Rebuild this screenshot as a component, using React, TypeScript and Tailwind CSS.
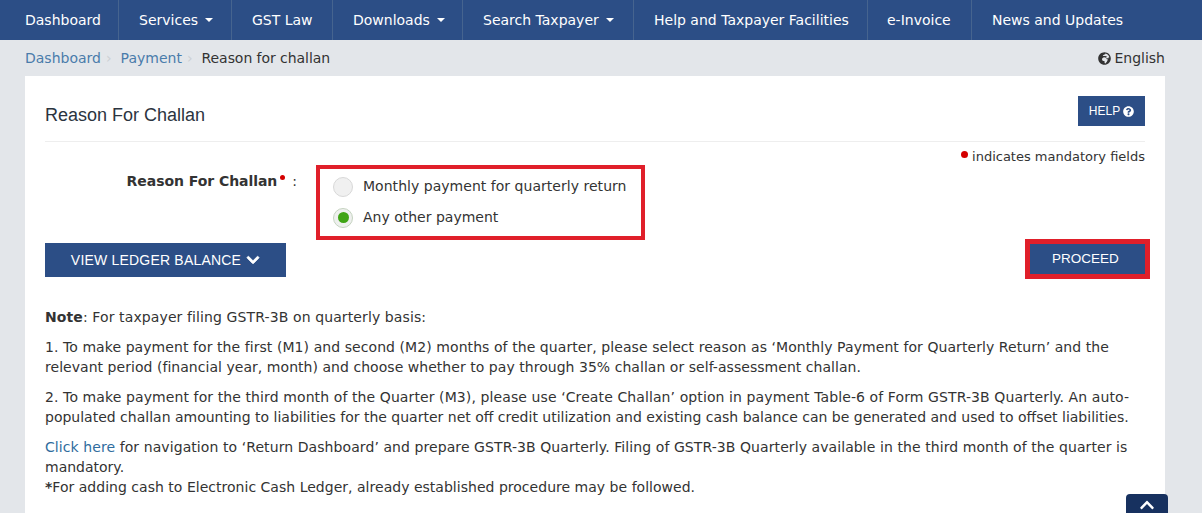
import { FaGlobeAfrica, FaQuestionCircle, FaChevronDown, FaChevronUp } from "react-icons/fa";

function Caret() {
  return <span className="ml-[7px] inline-block h-0 w-0 border-x-[4px] border-t-[4px] border-x-transparent border-t-white align-middle" />;
}

function Sep() {
  return <span className="ml-[5px] mr-[9px] text-[14px] leading-none text-[#ccd0d4]">›</span>;
}

export default function App() {
  return (
    <div className="h-[513px] w-[1202px] overflow-hidden bg-[#e3e6ea] font-['DejaVu_Sans',sans-serif] text-[14px] text-[#333333]">
      <nav className="flex h-10 items-stretch bg-[#2c4e86] text-white">
        <a className="flex w-[119px] items-center border-r border-[#46648f] pl-[25px]">Dashboard</a>
        <a className="flex w-[113px] items-center border-r border-[#46648f] pl-[20px]">Services<Caret /></a>
        <a className="flex w-[101px] items-center border-r border-[#46648f] pl-[20px]">GST Law</a>
        <a className="flex w-[130px] items-center border-r border-[#46648f] pl-[20px]">Downloads<Caret /></a>
        <a className="flex w-[171px] items-center border-r border-[#46648f] pl-[20px]">Search Taxpayer<Caret /></a>
        <a className="flex w-[234px] items-center border-r border-[#46648f] pl-[20px]">Help and Taxpayer Facilities</a>
        <a className="flex w-[104px] items-center border-r border-[#46648f] pl-[19px]">e-Invoice</a>
        <a className="flex items-center pl-[20px]">News and Updates</a>
      </nav>

      <div className="flex h-9 items-center justify-between pl-[25px] pr-[37px]">
        <div className="flex items-center">
          <a className="text-[#4a7cab]">Dashboard</a>
          <Sep />
          <a className="text-[#4a7cab]">Payment</a>
          <Sep />
          <span className="tracking-[-0.05px]">Reason for challan</span>
        </div>
        <div className="flex items-center gap-[3px]">
          <FaGlobeAfrica className="size-[13px] text-[#333]" />
          <span>English</span>
        </div>
      </div>

      <main className="mx-[25px] h-[437px] w-[1140px] bg-white px-5 pt-5">
        <div className="flex h-[46px] items-start justify-between border-b border-[#eeeeee]">
          <h1 className="pt-[8px] font-['Liberation_Sans',sans-serif] text-[18px] leading-[22px] text-[#2b3440]">Reason For Challan</h1>
          <button className="flex h-[30px] w-[67px] items-center justify-center gap-[3px] bg-[#2c4e86] font-['Liberation_Sans',sans-serif] text-[12px] text-white">
            HELP <FaQuestionCircle className="size-[11px]" />
          </button>
        </div>

        <div className="flex h-[23px] items-center justify-end pt-[7px] text-[13px]">
          <span className="mb-[5px] mr-[4px] size-[7px] rounded-full bg-[#d40000]" />
          <span>indicates mandatory fields</span>
        </div>

        <div className="flex items-start">
          <div className="flex h-[40px] w-[252px] items-start justify-end pt-[6px]">
            <b className="font-bold tracking-[-0.05px]">Reason For Challan</b>
            <span className="mx-[3px] mt-[4px] size-[5px] rounded-full bg-[#d40000]" />
            <span className="ml-[4px]">:</span>
          </div>
          <div className="ml-[19px] flex h-[75px] w-[329px] flex-col border-4 border-[#e01f2a] pl-[13px] pt-[2px]">
            <label className="flex h-[31px] items-center gap-[10px] tracking-[0.03px]">
              <span className="size-[20px] rounded-full border border-[#d8d8d8] bg-[#f0f0f0]" />
              Monthly payment for quarterly return
            </label>
            <label className="flex h-[31px] items-center gap-[10px]">
              <span className="flex size-[20px] items-center justify-center rounded-full border border-[#c5d3c0] bg-[#eef0ee]">
                <span className="size-[11px] rounded-full bg-[#3fa415]" />
              </span>
              Any other payment
            </label>
          </div>
        </div>

        <div className="-mt-[1px] flex items-start justify-between">
          <button className="mt-[4px] flex h-[34px] w-[241px] items-center justify-center gap-[5px] bg-[#2c4e86] font-['Liberation_Sans',sans-serif] text-[14px] tracking-[0.2px] text-white">
            VIEW LEDGER BALANCE <FaChevronDown className="size-[14px] stroke-current stroke-[30]" />
          </button>
          <div className="-mr-[5px] border-[5px] border-[#e01f2a]">
            <button className="flex h-[30px] w-[115px] items-center justify-center bg-[#2c4e86] pr-[4px] font-['Liberation_Sans',sans-serif] text-[13.5px] text-white">
              PROCEED
            </button>
          </div>
        </div>

        <div className="mt-[28px] leading-[20px]">
          <p className="tracking-[0.11px]"><b>Note</b>: For taxpayer filing GSTR-3B on quarterly basis:</p>
          <p className="mt-[10px]">
            <span className="block whitespace-nowrap tracking-[0.07px]">1. To make payment for the first (M1) and second (M2) months of the quarter, please select reason as ‘Monthly Payment for Quarterly Return’ and the</span>
            <span className="block whitespace-nowrap tracking-[0.04px]">relevant period (financial year, month) and choose whether to pay through 35% challan or self-assessment challan.</span>
          </p>
          <p className="mt-[10px]">
            <span className="block whitespace-nowrap tracking-[0.1px]">2. To make payment for the third month of the Quarter (M3), please use ‘Create Challan’ option in payment Table-6 of Form GSTR-3B Quarterly. An auto-</span>
            <span className="block whitespace-nowrap">populated challan amounting to liabilities for the quarter net off credit utilization and existing cash balance can be generated and used to offset liabilities.</span>
          </p>
          <p className="mt-[10px]">
            <span className="block whitespace-nowrap tracking-[0.08px]"><a className="text-[#2f6d9e]">Click here</a> for navigation to ‘Return Dashboard’ and prepare GSTR-3B Quarterly. Filing of GSTR-3B Quarterly available in the third month of the quarter is</span>
            <span className="block">mandatory.</span>
          </p>
          <p className="tracking-[0.02px]"><b>*</b>For adding cash to Electronic Cash Ledger, already established procedure may be followed.</p>
        </div>
      </main>

      <button className="fixed left-[1126px] top-[494px] flex h-[30px] w-[42px] justify-center rounded-[4px] bg-[#17315f] pt-[3px] text-white">
        <FaChevronUp className="size-[16px]" />
      </button>
    </div>
  );
}
